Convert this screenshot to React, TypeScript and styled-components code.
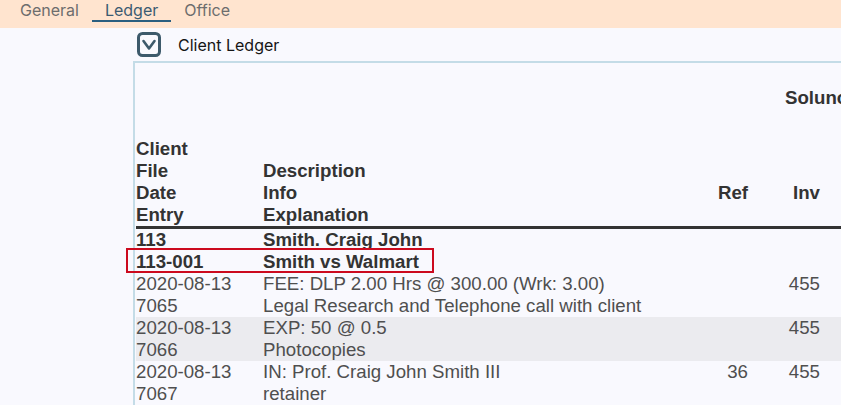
import React from "react";
import styled, { createGlobalStyle } from "styled-components";

const Global = createGlobalStyle`
  html, body { margin: 0; padding: 0; }
  body {
    background: #f9f9fe;
    width: 841px;
    height: 405px;
    overflow: hidden;
  }
`;

const TabBar = styled.div`
  height: 28px;
  background: #ffe4cf;
  display: flex;
  align-items: flex-start;
  padding-left: 7px;
  box-sizing: border-box;
`;

const Tab = styled.div<{ $active?: boolean }>`
  font-family: Inter, "Noto Sans", sans-serif;
  font-size: 16px;
  line-height: 21px;
  height: 20px;
  padding: 0 13px;
  color: ${(p) => (p.$active ? "#3b5b72" : "#6d6d6d")};
  border-bottom: 2px solid ${(p) => (p.$active ? "#2b5f80" : "transparent")};
  cursor: pointer;
`;

const SectionHeader = styled.div`
  display: flex;
  align-items: center;
  gap: 17px;
  margin: 4px 0 0 137px;
  height: 25px;
  font-family: Inter, "Noto Sans", sans-serif;
  font-size: 16px;
  color: #151515;
`;

const Panel = styled.div`
  margin: 4px 0 0 133px;
  border-top: 2px solid #c4dce7;
  border-left: 2px solid #c4dce7;
  padding-left: 1px;
  height: 400px;
  font-family: "Liberation Sans", Arial, sans-serif;
  font-size: 18.67px;
  line-height: 22px;
`;

const Title = styled.div`
  margin-top: 24px;
  padding-left: 649px;
  font-weight: bold;
  color: #333;
  white-space: nowrap;
`;

const cols = "127px 437px 48px 72px 110px 110px";

const HeaderRow = styled.div`
  margin-top: 29px;
  display: grid;
  grid-template-columns: ${cols};
  width: 904px;
  border-bottom: 3px solid #333;
  font-weight: bold;
  color: #333;
`;

const Row = styled.div<{ $shade?: boolean; $bold?: boolean }>`
  position: relative;
  display: grid;
  grid-template-columns: ${cols};
  width: 904px;
  background: ${(p) => (p.$shade ? "#ebebef" : "transparent")};
  font-weight: ${(p) => (p.$bold ? "bold" : "normal")};
  color: ${(p) => (p.$bold ? "#333" : "#4f4f4f")};
`;

const Cell = styled.div<{ $right?: boolean; $offset?: number }>`
  display: flex;
  flex-direction: column;
  text-align: ${(p) => (p.$right ? "right" : "left")};
  padding-top: ${(p) => (p.$offset ?? 0) * 22}px;
  white-space: nowrap;
`;

const Highlight = styled.div`
  position: absolute;
  left: -10px;
  top: -3px;
  width: 308px;
  height: 25px;
  box-sizing: border-box;
  border: 2px solid #cc0a1e;
  pointer-events: none;
`;

const Check = () => (
  <svg width="24" height="25" viewBox="0 0 24 25">
    <rect x="1.5" y="1.5" width="21" height="22" rx="4" fill="none" stroke="#3d5a6b" strokeWidth="3" />
    <path d="M6.5 9 L12 16.5 L17.5 9" fill="none" stroke="#3d5a6b" strokeWidth="2.6" strokeLinecap="round" strokeLinejoin="round" />
  </svg>
);

const entries = [
  { date: "2020-08-13", id: "7065", desc: "FEE: DLP 2.00 Hrs @ 300.00 (Wrk: 3.00)", expl: "Legal Research and Telephone call with client", ref: "", inv: "455" },
  { date: "2020-08-13", id: "7066", desc: "EXP: 50 @ 0.5", expl: "Photocopies", ref: "", inv: "455" },
  { date: "2020-08-13", id: "7067", desc: "IN: Prof. Craig John Smith III", expl: "retainer", ref: "36", inv: "455" },
];

export default function App() {
  return (
    <>
      <Global />
      <TabBar>
        <Tab>General</Tab>
        <Tab $active>Ledger</Tab>
        <Tab>Office</Tab>
      </TabBar>
      <SectionHeader>
        <Check />
        <span>Client Ledger</span>
      </SectionHeader>
      <Panel>
        <Title>Solunova Legal LLP</Title>
        <HeaderRow>
          <Cell>
            <span>Client</span>
            <span>File</span>
            <span>Date</span>
            <span>Entry</span>
          </Cell>
          <Cell $offset={1}>
            <span>Description</span>
            <span>Info</span>
            <span>Explanation</span>
          </Cell>
          <Cell $right $offset={2}>Ref</Cell>
          <Cell $right $offset={2}>Inv</Cell>
          <Cell />
          <Cell />
        </HeaderRow>
        <Row $bold>
          <Cell>113</Cell>
          <Cell>Smith. Craig John</Cell>
        </Row>
        <Row $bold>
          <Highlight />
          <Cell>113-001</Cell>
          <Cell>Smith vs Walmart</Cell>
        </Row>
        {entries.map((e, i) => (
          <Row key={e.id} $shade={i % 2 === 1}>
            <Cell>
              <span>{e.date}</span>
              <span>{e.id}</span>
            </Cell>
            <Cell>
              <span>{e.desc}</span>
              <span>{e.expl}</span>
            </Cell>
            <Cell $right>{e.ref}</Cell>
            <Cell $right>{e.inv}</Cell>
            <Cell />
            <Cell />
          </Row>
        ))}
      </Panel>
    </>
  );
}
